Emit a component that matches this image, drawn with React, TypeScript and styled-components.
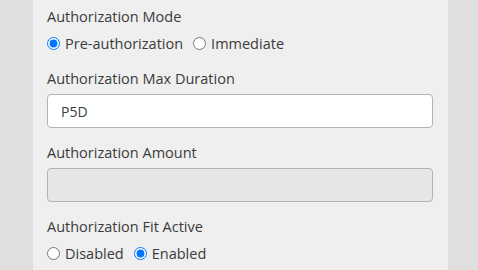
import React, { useState } from 'react';
import styled, { createGlobalStyle } from 'styled-components';

const GlobalStyle = createGlobalStyle`
	html, body {
		margin: 0;
		padding: 0;
		background: #dfdfdf;
		font-family: 'Open Sans', 'Noto Sans', Arial, sans-serif;
		color: #3b3b3b;
	}
`;

const Page = styled.div`
	display: flex;
	min-height: 270px;
	padding: 0 30px 0 33px;
	background: #dfdfdf;
`;

const Panel = styled.form`
	flex: 1;
	background: #efefef;
	padding: 7px 15px 0 14px;
`;

const Group = styled.div`
	margin-bottom: 15px;
`;

const Label = styled.div`
	font-size: 14.5px;
	line-height: 20px;
	margin-bottom: 5px;
	color: #3b3b3b;
`;

const RadioRow = styled.div`
	display: flex;
	align-items: center;
	height: 22px;
	gap: 10px;
`;

const RadioOption = styled.label`
	display: flex;
	align-items: center;
	font-size: 14.5px;
	color: #3b3b3b;
	cursor: pointer;
`;

const Radio = styled.input.attrs({ type: 'radio' })`
	width: 13px;
	height: 13px;
	margin: 0 5px 0 0;
	accent-color: #0075ff;
`;

const TextInput = styled.input<{ $disabled?: boolean }>`
	display: block;
	box-sizing: border-box;
	width: 100%;
	height: 34px;
	padding: 0 13px;
	border: 1px solid #adb3bd;
	border-radius: 4px;
	background: ${(p) => (p.$disabled ? '#e6e6e6' : '#ffffff')};
	font-family: inherit;
	font-size: 14px;
	color: #3b3b3b;
	outline: none;
`;

const App: React.FC = () => {
	const [mode, setMode] = useState('pre');
	const [fit, setFit] = useState('enabled');
	const [duration, setDuration] = useState('P5D');

	return (
		<>
			<GlobalStyle />
			<Page>
				<Panel onSubmit={(e) => e.preventDefault()}>
					<Group>
						<Label>Authorization Mode</Label>
						<RadioRow>
							<RadioOption>
								<Radio name='mode' checked={mode === 'pre'} onChange={() => setMode('pre')} />
								Pre-authorization
							</RadioOption>
							<RadioOption>
								<Radio name='mode' checked={mode === 'immediate'} onChange={() => setMode('immediate')} />
								Immediate
							</RadioOption>
						</RadioRow>
					</Group>
					<Group>
						<Label>Authorization Max Duration</Label>
						<TextInput value={duration} onChange={(e) => setDuration(e.target.value)} />
					</Group>
					<Group>
						<Label>Authorization Amount</Label>
						<TextInput $disabled disabled />
					</Group>
					<Group>
						<Label>Authorization Fit Active</Label>
						<RadioRow>
							<RadioOption>
								<Radio name='fit' checked={fit === 'disabled'} onChange={() => setFit('disabled')} />
								Disabled
							</RadioOption>
							<RadioOption>
								<Radio name='fit' checked={fit === 'enabled'} onChange={() => setFit('enabled')} />
								Enabled
							</RadioOption>
						</RadioRow>
					</Group>
				</Panel>
			</Page>
		</>
	);
};

export default App;
